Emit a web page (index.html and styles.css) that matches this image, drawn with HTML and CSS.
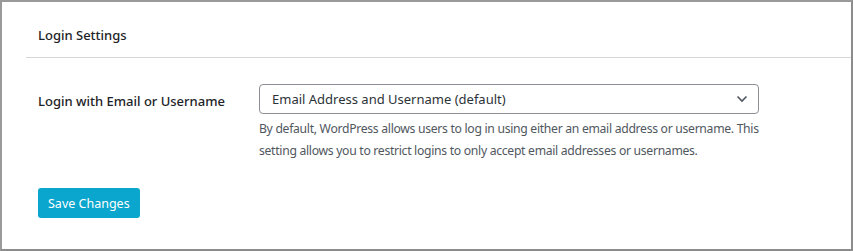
FILE: index.html
```html
<!DOCTYPE html>
<html>
<head>
<meta charset="utf-8">
<link rel="stylesheet" href="styles.css">
</head>
<body>
<div class="frame">
  <div class="header"><h2 class="title">Login Settings</h2></div>
  <div class="content">
    <div class="row">
      <label class="label">Login with Email or Username</label>
      <div class="field">
        <div class="select">
          <span>Email Address and Username (default)</span>
          <svg class="chev" width="12" height="8" viewBox="0 0 12 8"><path d="M1.5 1.5 L6 6 L10.5 1.5" fill="none" stroke="#50575e" stroke-width="1.6"/></svg>
        </div>
        <p class="desc">By default, WordPress allows users to log in using either an email address or username. This setting allows you to restrict logins to only accept email addresses or usernames.</p>
      </div>
    </div>
    <button class="btn">Save Changes</button>
  </div>
</div>
</body>
</html>
```

FILE: styles.css
```css
* { box-sizing: border-box; }
html, body { margin: 0; padding: 0; background: #fff; }
body { font-family: "Noto Sans", "Open Sans", sans-serif; color: #1d2327; }
.frame {
  width: 853px; height: 251px;
  border: 2px solid #9a9a9a;
  border-right-color: #8c8c8c; border-bottom-color: #8c8c8c;
  background: #fff;
}
.header {
  margin-left: 24px;
  height: 56px;
  border-bottom: 1px solid #d6d6d6;
  padding-left: 12px;
  display: flex; align-items: center;
}
.title { margin: 0; font-size: 13px; font-weight: 500; padding-top: 10px; }
.content { padding: 26px 0 0 36px; }
.row { display: flex; }
.label { width: 221px; font-size: 13px; font-weight: 500; padding-top: 8px; }
.field { width: 500px; }
.select {
  height: 30px; border: 1px solid #8c8f94; border-radius: 4px;
  display: flex; align-items: center; justify-content: space-between;
  padding: 0 10px 0 12px; font-size: 13px; color: #2c3338;
}
.desc { margin: 4px 0 0; font-size: 12.2px; letter-spacing: -0.3px; line-height: 22px; color: #50575e; width: 500px; }
.btn {
  margin-top: 26px;
  background: #0aa6cd; color: #fff; border: none; border-radius: 3px;
  height: 30px; padding: 0 10px; font-family: inherit; font-size: 12.5px;
}
```
